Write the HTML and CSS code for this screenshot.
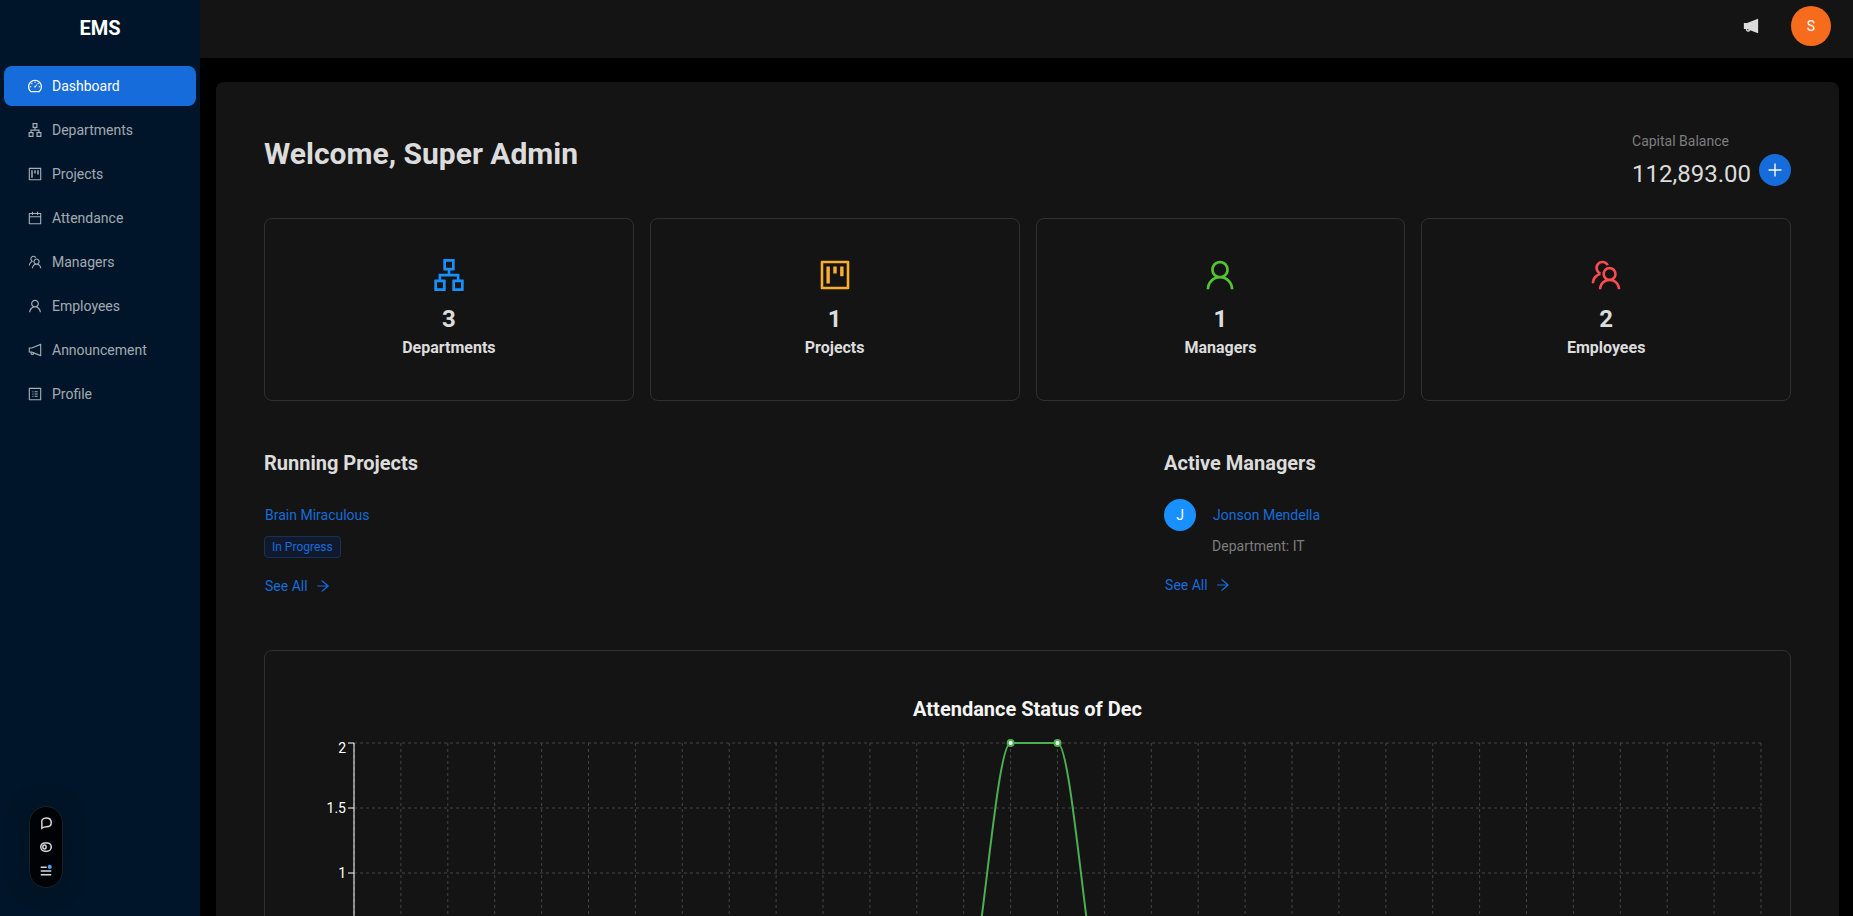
FILE: index.html
```html
<!DOCTYPE html>
<html lang="en">
<head>
<meta charset="utf-8">
<meta name="viewport" content="width=device-width, initial-scale=1">
<title>EMS</title>
<link rel="stylesheet" href="styles.css">
</head>
<body>
<svg class="sprite" aria-hidden="true">
  <symbol id="i-dashboard" viewBox="64 64 896 896"><path d="M924.8 385.6a446.7 446.7 0 00-96-142.4 446.7 446.7 0 00-142.4-96C631.1 123.8 572.5 112 512 112s-119.1 11.8-174.4 35.2a446.7 446.7 0 00-142.4 96 446.7 446.7 0 00-96 142.4C75.8 440.9 64 499.5 64 560c0 132.7 58.3 257.7 159.9 343.1l1.7 1.4c5.8 4.8 13.1 7.5 20.6 7.5h531.7c7.5 0 14.8-2.7 20.6-7.5l1.7-1.4C901.7 817.7 960 692.7 960 560c0-60.5-11.9-119.1-35.2-174.4zM761.4 836H262.6A371.12 371.12 0 01140 560c0-99.4 38.7-192.8 109-263 70.3-70.3 163.7-109 263-109 99.4 0 192.8 38.7 263 109 70.3 70.3 109 163.7 109 263 0 105.6-44.5 205.5-122.6 276zM623.5 421.5a8.03 8.03 0 00-11.3 0L527.7 506c-18.7-5-39.4-.2-54.1 14.5a55.95 55.95 0 000 79.2 55.95 55.95 0 0079.2 0 55.87 55.87 0 0014.5-54.1l84.5-84.5c3.1-3.1 3.1-8.2 0-11.3l-28.3-28.3zM490 320h44c4.4 0 8-3.6 8-8v-80c0-4.4-3.6-8-8-8h-44c-4.4 0-8 3.6-8 8v80c0 4.4 3.6 8 8 8zm260 218v44c0 4.4 3.6 8 8 8h80c4.4 0 8-3.6 8-8v-44c0-4.4-3.6-8-8-8h-80c-4.4 0-8 3.6-8 8zm12.7-197.2l-31.1-31.1a8.03 8.03 0 00-11.3 0l-56.6 56.6a8.03 8.03 0 000 11.3l31.1 31.1c3.1 3.1 8.2 3.1 11.3 0l56.6-56.6c3.1-3.1 3.1-8.2 0-11.3zm-458.6-31.1a8.03 8.03 0 00-11.3 0l-31.1 31.1a8.03 8.03 0 000 11.3l56.6 56.6c3.1 3.1 8.2 3.1 11.3 0l31.1-31.1c3.1-3.1 3.1-8.2 0-11.3l-56.6-56.6zM262 530h-80c-4.4 0-8 3.6-8 8v44c0 4.4 3.6 8 8 8h80c4.4 0 8-3.6 8-8v-44c0-4.4-3.6-8-8-8z"/></symbol>
  <symbol id="i-apartment" viewBox="64 64 896 896"><path d="M908 640H804V488c0-4.4-3.6-8-8-8H548v-96h108c8.8 0 16-7.2 16-16V80c0-8.8-7.2-16-16-16H368c-8.8 0-16 7.2-16 16v288c0 8.8 7.2 16 16 16h108v96H228c-4.4 0-8 3.6-8 8v152H116c-8.8 0-16 7.2-16 16v288c0 8.8 7.2 16 16 16h288c8.8 0 16-7.2 16-16V656c0-8.8-7.2-16-16-16H292v-88h440v88H620c-8.8 0-16 7.2-16 16v288c0 8.8 7.2 16 16 16h288c8.8 0 16-7.2 16-16V656c0-8.8-7.2-16-16-16zm-564 76v168H176V716h168zm84-408V140h168v168H428zm420 576H680V716h168v168z"/></symbol>
  <symbol id="i-project" viewBox="64 64 896 896"><path d="M280 752h80c4.4 0 8-3.6 8-8V280c0-4.4-3.6-8-8-8h-80c-4.4 0-8 3.6-8 8v464c0 4.4 3.6 8 8 8zm192-280h80c4.4 0 8-3.6 8-8V280c0-4.4-3.6-8-8-8h-80c-4.4 0-8 3.6-8 8v184c0 4.4 3.6 8 8 8zm192 72h80c4.4 0 8-3.6 8-8V280c0-4.4-3.6-8-8-8h-80c-4.4 0-8 3.6-8 8v256c0 4.4 3.6 8 8 8zm216-432H144c-17.7 0-32 14.3-32 32v736c0 17.7 14.3 32 32 32h736c17.7 0 32-14.3 32-32V144c0-17.7-14.3-32-32-32zm-40 728H184V184h656v656z"/></symbol>
  <symbol id="i-calendar" viewBox="64 64 896 896"><path d="M880 184H712v-64c0-4.4-3.6-8-8-8h-56c-4.4 0-8 3.6-8 8v64H384v-64c0-4.4-3.6-8-8-8h-56c-4.4 0-8 3.6-8 8v64H144c-17.7 0-32 14.3-32 32v664c0 17.7 14.3 32 32 32h736c17.7 0 32-14.3 32-32V216c0-17.7-14.3-32-32-32zm-40 656H184V460h656v380zM184 392V256h128v48c0 4.4 3.6 8 8 8h56c4.4 0 8-3.6 8-8v-48h256v48c0 4.4 3.6 8 8 8h56c4.4 0 8-3.6 8-8v-48h128v136H184z"/></symbol>
  <symbol id="i-team" viewBox="64 64 896 896"><path d="M824.2 699.9a301.55 301.55 0 00-86.4-60.4C783.1 602.8 812 546.8 812 484c0-110.8-92.4-201.7-203.2-200-109.1 1.7-197 90.6-197 200 0 62.8 29 118.8 74.2 155.5a300.95 300.95 0 00-86.4 60.4C345 754.6 314 826.8 312 903.8a8 8 0 008 8.2h56c4.3 0 7.9-3.4 8-7.7 1.9-58 25.4-112.3 66.7-153.5A226.62 226.62 0 01612 684c60.9 0 118.2 23.7 161.3 66.8C814.6 792 838 846.3 840 904.3c.1 4.3 3.7 7.7 8 7.7h56a8 8 0 008-8.2c-2-77-33-149.2-87.8-203.9zM612 612c-34.2 0-66.4-13.3-90.5-37.5a126.86 126.86 0 01-37.5-91.8c.3-32.8 13.4-64.5 36.3-88 24-24.6 56.1-38.3 90.4-38.7 33.9-.3 66.8 12.9 91 36.6 24.8 24.3 38.4 56.8 38.4 91.4 0 34.2-13.3 66.3-37.5 90.5A127.3 127.3 0 01612 612zM361.5 510.4c-.9-8.7-1.4-17.5-1.4-26.4 0-15.9 1.5-31.4 4.3-46.5.7-3.6-1.2-7.3-4.5-8.8-13.6-6.1-26.1-14.5-36.9-25.1a127.54 127.54 0 01-38.7-95.4c.9-32.1 13.8-62.6 36.3-85.6 24.7-25.3 57.9-39.1 93.2-38.7 31.9.3 62.7 12.6 86 34.4 7.9 7.4 14.7 15.6 20.4 24.4 2 3.1 5.9 4.4 9.3 3.2 17.6-6.1 36.2-10.4 55.3-12.4 5.6-.6 8.8-6.6 6.3-11.6-32.5-64.3-98.9-108.7-175.7-109.9-110.9-1.7-203.3 89.2-203.3 199.9 0 62.8 28.9 118.8 74.2 155.5-31.8 14.7-61.1 35-86.5 60.4-54.8 54.7-85.8 126.9-87.8 204a8 8 0 008 8.2h56.1c4.3 0 7.9-3.4 8-7.7 1.9-58 25.4-112.3 66.7-153.5 29.4-29.4 65.4-49.8 104.7-59.7 3.9-1 6.5-4.7 6-8.7z"/></symbol>
  <symbol id="i-user" viewBox="64 64 896 896"><path d="M858.5 763.6a374 374 0 00-80.6-119.5 375.63 375.63 0 00-119.5-80.6c-.4-.2-.8-.3-1.2-.5C719.5 518 760 444.7 760 362c0-137-111-248-248-248S264 225 264 362c0 82.7 40.5 156 102.8 201.1-.4.2-.8.3-1.2.5-44.8 18.9-85 46-119.5 80.6a375.63 375.63 0 00-80.6 119.5A371.7 371.7 0 00136 901.8a8 8 0 008 8.2h60c4.4 0 7.9-3.5 8-7.8 2-77.2 33-149.5 87.8-204.3 56.7-56.7 132-87.9 212.2-87.9s155.5 31.2 212.2 87.9C779 752.7 810 825 812 902.2c.1 4.4 3.6 7.8 8 7.8h60a8 8 0 008-8.2c-1-47.8-10.9-94.3-29.5-138.2zM512 534c-45.9 0-89.1-17.9-121.6-50.4S340 407.9 340 362c0-45.9 17.9-89.1 50.4-121.6S466.1 190 512 190s89.1 17.9 121.6 50.4S684 316.1 684 362c0 45.9-17.9 89.1-50.4 121.6S557.9 534 512 534z"/></symbol>
  <symbol id="i-notification" viewBox="64 64 896 896"><path d="M880 112c-3.8 0-7.7.7-11.6 2.3L292 345.9H128c-8.8 0-16 7.4-16 16.6v299c0 9.2 7.2 16.6 16 16.6h101.7c-3.7 11.6-5.7 23.9-5.7 36.4 0 65.9 53.8 119.5 120 119.5 55.4 0 102.1-37.6 115.9-88.4l408.6 164.2c3.9 1.5 7.8 2.3 11.6 2.3 16.9 0 32-14.2 32-33.2V145.2C912 126.2 897 112 880 112zM344 762.3c-26.5 0-48-21.4-48-47.8 0-11.2 3.9-21.9 11-30.4l84.9 34.1c-2 24.6-22.7 44.1-47.9 44.1zm496 58.4L318.8 611.3l-12.9-5.2H184V417.9h121.9l12.9-5.2L840 203.3v617.4z"/></symbol>
  <symbol id="i-notification-filled" viewBox="64 64 896 896"><path d="M880 112c-3.8 0-7.7.7-11.6 2.3L292 345.9H128c-8.8 0-16 7.4-16 16.6v299c0 9.2 7.2 16.6 16 16.6h101.6c-3.7 11.6-5.6 23.9-5.6 36.4 0 65.9 53.8 119.5 120 119.5 55.4 0 102.1-37.6 115.9-88.4l408.6 164.2c3.9 1.5 7.8 2.3 11.6 2.3 16.9 0 32-14.2 32-33.2V145.2C912 126.2 897 112 880 112zM344 762.3c-26.5 0-48-21.4-48-47.8 0-11.2 3.9-21.9 11-30.4l84.9 34.1c-2 24.6-22.7 44.1-47.9 44.1z"/></symbol>
  <symbol id="i-profile" viewBox="64 64 896 896"><path d="M880 112H144c-17.7 0-32 14.3-32 32v736c0 17.7 14.3 32 32 32h736c17.7 0 32-14.3 32-32V144c0-17.7-14.3-32-32-32zm-40 728H184V184h656v656zM492 400h184c4.4 0 8-3.6 8-8v-48c0-4.4-3.6-8-8-8H492c-4.4 0-8 3.6-8 8v48c0 4.4 3.6 8 8 8zm0 144h184c4.4 0 8-3.6 8-8v-48c0-4.4-3.6-8-8-8H492c-4.4 0-8 3.6-8 8v48c0 4.4 3.6 8 8 8zm0 144h184c4.4 0 8-3.6 8-8v-48c0-4.4-3.6-8-8-8H492c-4.4 0-8 3.6-8 8v48c0 4.4 3.6 8 8 8zM340 368a40 40 0 1080 0 40 40 0 10-80 0zm0 144a40 40 0 1080 0 40 40 0 10-80 0zm0 144a40 40 0 1080 0 40 40 0 10-80 0z"/></symbol>
  <symbol id="i-arrow" viewBox="64 64 896 896"><path d="M869 487.8L491.2 159.9c-2.9-2.5-6.6-3.9-10.5-3.9h-88.5c-7.4 0-10.8 9.2-5.2 14l350.2 304H152c-4.4 0-8 3.6-8 8v60c0 4.4 3.6 8 8 8h585.1L386.9 854c-5.6 4.9-2.2 14 5.2 14h91.5c1.9 0 3.8-.7 5.2-2L869 536.2a32.07 32.07 0 000-48.4z"/></symbol>
  <symbol id="i-plus" viewBox="64 64 896 896"><path d="M482 152h60q8 0 8 8v704q0 8-8 8h-60q-8 0-8-8V160q0-8 8-8z"/><path d="M192 474h672q8 0 8 8v60q0 8-8 8H160q-8 0-8-8v-60q0-8 8-8z"/></symbol>
</svg>

<aside class="sidebar">
  <div class="brand">EMS</div>
  <nav class="menu">
    <a class="menu-item active" href="#"><svg class="icon"><use href="#i-dashboard"/></svg>Dashboard</a>
    <a class="menu-item" href="#"><svg class="icon"><use href="#i-apartment"/></svg>Departments</a>
    <a class="menu-item" href="#"><svg class="icon"><use href="#i-project"/></svg>Projects</a>
    <a class="menu-item" href="#"><svg class="icon"><use href="#i-calendar"/></svg>Attendance</a>
    <a class="menu-item" href="#"><svg class="icon"><use href="#i-team"/></svg>Managers</a>
    <a class="menu-item" href="#"><svg class="icon"><use href="#i-user"/></svg>Employees</a>
    <a class="menu-item" href="#"><svg class="icon"><use href="#i-notification"/></svg>Announcement</a>
    <a class="menu-item" href="#"><svg class="icon"><use href="#i-profile"/></svg>Profile</a>
  </nav>
</aside>

<div class="page">
  <header class="topbar">
    <button class="icon-button" type="button" aria-label="Announcements"><svg class="icon icon-md"><use href="#i-notification-filled"/></svg></button>
    <button class="avatar avatar-lg" type="button">S</button>
  </header>

  <main class="panel">
    <section class="intro">
      <h1 class="welcome">Welcome, Super Admin</h1>
      <div class="balance">
        <div class="balance-text">
          <div class="muted">Capital Balance</div>
          <div class="balance-value">112,893.00</div>
        </div>
        <button class="add-button" type="button" aria-label="Add capital"><svg class="icon icon-md"><use href="#i-plus"/></svg></button>
      </div>
    </section>

    <section class="stats">
      <div class="card stat">
        <svg class="icon icon-xl blue"><use href="#i-apartment"/></svg>
        <div class="stat-number">3</div>
        <div class="stat-label">Departments</div>
      </div>
      <div class="card stat">
        <svg class="icon icon-xl amber"><use href="#i-project"/></svg>
        <div class="stat-number">1</div>
        <div class="stat-label">Projects</div>
      </div>
      <div class="card stat">
        <svg class="icon icon-xl green"><use href="#i-user"/></svg>
        <div class="stat-number">1</div>
        <div class="stat-label">Managers</div>
      </div>
      <div class="card stat">
        <svg class="icon icon-xl red"><use href="#i-team"/></svg>
        <div class="stat-number">2</div>
        <div class="stat-label">Employees</div>
      </div>
    </section>

    <section class="lists">
      <div class="projects">
        <h2 class="section-title">Running Projects</h2>
        <a class="link" href="#">Brain Miraculous</a>
        <span class="tag">In Progress</span>
        <a class="link see-all" href="#">See All <svg class="icon"><use href="#i-arrow"/></svg></a>
      </div>
      <div class="managers">
        <h2 class="section-title">Active Managers</h2>
        <div class="person">
          <div class="avatar avatar-md">J</div>
          <div class="person-text">
            <a class="link" href="#">Jonson Mendella</a>
            <div class="muted">Department: IT</div>
          </div>
        </div>
        <a class="link see-all" href="#">See All <svg class="icon"><use href="#i-arrow"/></svg></a>
      </div>
    </section>

    <section class="card chart-card">
      <h2 class="chart-title">Attendance Status of Dec</h2>
      <svg class="chart" id="chart" role="img" aria-label="Attendance per day"></svg>
    </section>
  </main>
</div>

<div class="toolbar">
  <button class="tool" type="button" aria-label="Comment">
    <svg viewBox="0 0 16 16" class="tool-icon"><path class="line" d="M2.500 15V8.500C1.300 4 4 1.200 8.200 1.200S15 3.800 15 7.300 12.200 13 8.700 13C6.500 13 4.900 13.200 2.500 15Z"/></svg>
  </button>
  <button class="tool" type="button" aria-label="Toggle flags">
    <svg viewBox="0 0 16 16" class="tool-icon"><rect class="line" x="1" y="2.500" width="14" height="11" rx="5.500"/><ellipse class="line" cx="6" cy="8" rx="2.200" ry="2.600"/></svg>
  </button>
  <button class="tool" type="button" aria-label="Menu">
    <svg viewBox="0 0 16 16" class="tool-icon"><path class="line" d="M1 3H9M1 8H15M1 13H15"/><circle class="dot" cx="13" cy="2.500" r="2.700"/></svg>
  </button>
</div>
<script src="chart.js"></script>
</body>
</html>
```

FILE: styles.css
```css
* { box-sizing: border-box; }

html { scrollbar-width: none; }

body {
  margin: 0;
  display: flex;
  align-items: flex-start;
  min-height: 100vh;
  background: #000;
  color: #dcdcdc;
  font-family: Roboto, "Liberation Sans", sans-serif;
  font-size: 14px;
  line-height: 22px;
}

h1, h2 { margin: 0; }
a { text-decoration: none; }

button {
  border: 0;
  padding: 0;
  font: inherit;
  color: inherit;
  background: none;
  cursor: pointer;
}

.sprite { display: none; }

.icon {
  flex: none;
  width: 14px;
  height: 14px;
  fill: currentColor;
}
.icon-md { width: 16px; height: 16px; }
.icon-xl { width: 32px; height: 32px; }

.blue { color: #1890ff; }
.amber { color: #faad2e; }
.green { color: #52c432; }
.red { color: #ff4d4f; }

/* Sidebar */
.sidebar {
  position: sticky;
  top: 0;
  flex: none;
  width: 200px;
  height: 100vh;
  background: #001529;
}

.brand {
  padding: 16px 16px 18px;
  color: #fff;
  font-size: 20px;
  font-weight: 700;
  line-height: 24px;
  text-align: center;
}

.menu {
  display: flex;
  flex-direction: column;
  gap: 4px;
  padding: 8px 4px;
}

.menu-item {
  display: flex;
  align-items: center;
  gap: 10px;
  height: 40px;
  padding: 0 24px;
  border-radius: 8px;
  color: rgba(255, 255, 255, 0.65);
}
.menu-item.active { background: #156cda; color: #fff; }

/* Page */
.page { flex: 1; min-width: 0; }

.topbar {
  display: flex;
  align-items: center;
  justify-content: flex-end;
  gap: 32px;
  height: 58px;
  padding: 6px 22px 12px;
  background: #141414;
}

.icon-button { display: flex; }

.avatar {
  flex: none;
  display: flex;
  align-items: center;
  justify-content: center;
  border-radius: 50%;
  color: #fff;
}
.avatar-lg { width: 40px; height: 40px; background: #f76b1c; }
.avatar-md { width: 32px; height: 32px; background: #1890ff; }

.panel {
  margin: 24px 14px 24px 16px;
  padding: 48px;
  border-radius: 8px;
  background: #141414;
}

.intro {
  display: flex;
  justify-content: space-between;
  align-items: flex-start;
  margin-bottom: 28px;
}

.welcome {
  padding-top: 4px;
  font-size: 30px;
  font-weight: 700;
  line-height: 40px;
}

.balance { display: flex; align-items: flex-end; gap: 8px; }
.balance-value { padding-top: 6px; font-size: 24px; line-height: 32px; }
.muted { color: #7d7d7d; }

.add-button {
  display: flex;
  align-items: center;
  justify-content: center;
  width: 32px;
  height: 32px;
  margin-bottom: 4px;
  border-radius: 50%;
  background: #156cda;
  color: #fff;
}

.card {
  border: 1px solid #303030;
  border-radius: 8px;
}

.stats {
  display: grid;
  grid-template-columns: repeat(4, 1fr);
  gap: 16px;
  margin-bottom: 48px;
}

.stat {
  display: flex;
  flex-direction: column;
  align-items: center;
  padding: 40px 24px;
}
.stat-number {
  margin: 12px 0 1px;
  font-size: 24px;
  font-weight: 700;
  line-height: 32px;
}
.stat-label { font-size: 16px; font-weight: 700; line-height: 24px; }

/* Lists */
.lists {
  display: grid;
  grid-template-columns: repeat(24, 1fr);
  column-gap: 16px;
  margin-bottom: 48px;
}
.projects, .managers {
  display: flex;
  flex-direction: column;
  align-items: flex-start;
}
.projects { grid-column: span 14; }
.managers { grid-column: span 10; }

.section-title {
  margin-bottom: 22px;
  font-size: 20px;
  font-weight: 700;
  line-height: 28px;
}

.link {
  display: flex;
  align-items: center;
  height: 32px;
  border: 1px solid transparent;
  color: #156cda;
}
.see-all { gap: 8px; margin-top: 12px; }

.tag {
  margin-top: 5px;
  padding: 0 7px;
  border: 1px solid #15325b;
  border-radius: 4px;
  background: #111a2c;
  color: #156cda;
  font-size: 12px;
  line-height: 20px;
}

.person { display: flex; align-items: flex-start; gap: 16px; }
.person-text { display: flex; flex-direction: column; gap: 4px; }

/* Chart */
.chart-card { padding: 44px 24px; }
.chart-title {
  margin-bottom: 15px;
  color: #f5f5f5;
  font-size: 20px;
  font-weight: 700;
  line-height: 28px;
  text-align: center;
}
.chart { display: block; width: 100%; height: 300px; }
.grid { stroke: #444; stroke-dasharray: 3 3; }
.axis { stroke: #fff; }
.tick { fill: #fff; font-size: 14px; text-anchor: end; }
.curve { fill: none; stroke: #4caf50; stroke-width: 2; }
.marker { fill: #fff; stroke: #4caf50; stroke-width: 2; }

/* Floating toolbar */
.toolbar {
  position: fixed;
  left: 29px;
  bottom: 28px;
  display: flex;
  flex-direction: column;
  align-items: center;
  gap: 12px;
  width: 34px;
  padding: 10px 0;
  border: 1px solid #17222c;
  border-radius: 17px;
  background: #000306;
  box-shadow: 0 0 20px rgba(0, 20, 20, 0.5);
}
.tool { display: flex; }
.tool-icon { width: 12px; height: 12px; overflow: visible; }
.line { fill: none; stroke: #d6d6d6; stroke-width: 2; }
.dot { fill: #47a3ff; }
```

FILE: chart.js
```js
const SVG_NS = "http://www.w3.org/2000/svg";
const chart = document.getElementById("chart");

const days = 31;
const top0 = 5;
const left0 = 65;
const plotHeight = 260;
const maxValue = 2;
const values = Array.from({ length: days }, (_, i) => (i === 14 || i === 15 ? 2 : 0));

function add(tag, attrs, text) {
  const node = document.createElementNS(SVG_NS, tag);
  for (const key in attrs) node.setAttribute(key, attrs[key]);
  if (text) node.textContent = text;
  chart.appendChild(node);
}

function draw() {
  chart.replaceChildren();
  const right = chart.clientWidth - 5;
  const step = (right - left0) / (days - 1);
  const bottom = top0 + plotHeight;
  const px = i => left0 + i * step;
  const py = v => bottom - (v / maxValue) * plotHeight;

  for (let v = 0; v <= maxValue; v += 0.5) {
    add("line", { class: "grid", x1: left0, x2: right, y1: py(v), y2: py(v) });
  }
  for (let i = 0; i < days; i++) {
    add("line", { class: "grid", x1: px(i), x2: px(i), y1: top0, y2: bottom });
  }

  add("line", { class: "axis", x1: left0, x2: right, y1: bottom, y2: bottom });
  add("line", { class: "axis", x1: left0, x2: left0, y1: top0, y2: bottom });
  for (let v = 0; v <= maxValue; v += 0.5) {
    add("line", { class: "axis", x1: left0 - 6, x2: left0, y1: py(v), y2: py(v) });
    const baseline = Math.max(py(v) + 5, 15);
    add("text", { class: "tick", x: left0 - 8, y: baseline }, String(v));
  }

  let d = `M${px(0)},${py(values[0])}`;
  for (let i = 1; i < days; i++) {
    d += `C${px(i - 1) + step / 3},${py(values[i - 1])},${px(i) - step / 3},${py(values[i])},${px(i)},${py(values[i])}`;
  }
  add("path", { class: "curve", d });
  values.forEach((v, i) => add("circle", { class: "marker", cx: px(i), cy: py(v), r: 3 }));
}

draw();
window.addEventListener("resize", draw);
```
